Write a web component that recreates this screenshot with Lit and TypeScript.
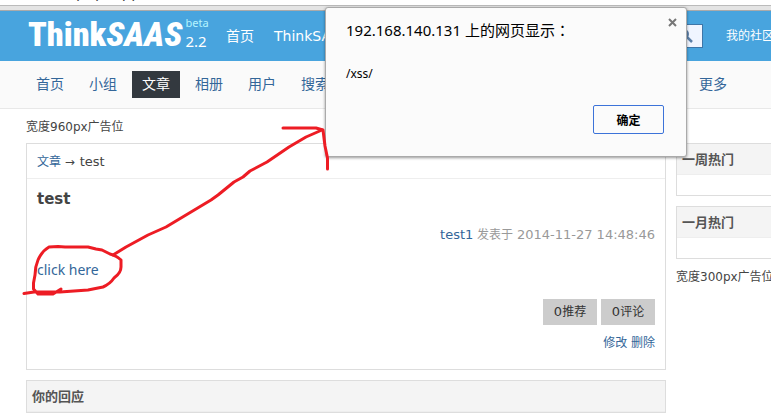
import { LitElement, html, css } from "lit";
import { customElement } from "lit/decorators.js";

@customElement("app-root")
export class AppRoot extends LitElement {
  static styles = css`
    :host {
      display: block;
      position: relative;
      min-height: 100vh;
      overflow: hidden;
      background: #fff;
      color: #444;
      font: 12px/20px "DejaVu Sans", "Noto Sans CJK SC", sans-serif;
    }
    * { box-sizing: border-box; }
    a { color: #369; text-decoration: none; }
    h1, h2, p { margin: 0; }
    .latin { font-size: 13px; }

    .chrome {
      display: flex;
      align-items: flex-end;
      height: 11px;
      padding: 0 0 9px 76px;
      overflow: hidden;
      background: linear-gradient(#fff 5px, #bbb 5px, #bbb 6px, #e4e4e4 6px, #e4e4e4 10px, #aaa 10px);
      font-size: 15px;
      line-height: 18px;
    }
    .header {
      display: flex;
      align-items: center;
      height: 50px;
      padding-left: 28px;
      background: #48a4de;
      white-space: nowrap;
    }
    .header a { color: #fff; font-size: 14px; }
    .header .logo {
      display: flex;
      width: 198px;
      height: 46px;
      line-height: 42px;
      font-family: "Roboto Condensed", "Liberation Sans", sans-serif;
      font-weight: 900;
      font-size: 34px;
    }
    .logo .version {
      display: flex;
      flex-direction: column;
      padding: 1px 0 0 3px;
      font: 11px/18px "Noto Sans", sans-serif;
      color: #b5f4ff;
    }
    .version .number { font-size: 15px; color: #fff; }
    .header .links { display: flex; flex: 1; gap: 20px; }
    .search { display: flex; height: 24px; width: 77px; }
    .search button {
      display: flex;
      align-items: center;
      justify-content: center;
      width: 34px;
      height: 24px;
      margin-left: 20px;
      padding: 0;
      border: 1px solid #3e76a8;
      background: #f0f5ff;
    }
    .header .mine { width: 45px; }
    .header .mine a { font-size: 12px; }

    .nav {
      display: flex;
      align-items: center;
      gap: 5px;
      height: 48px;
      padding-left: 26px;
      border-bottom: 1px solid #e8e8e8;
      background: #fafafa;
      white-space: nowrap;
    }
    .nav a { padding: 0 10px; font-size: 14px; line-height: 27px; }
    .nav a.active { background: #33393f; color: #fff; }
    .nav .more { margin: 0 0 0 auto; padding-right: 44px; }

    .page {
      display: grid;
      grid-template-columns: minmax(0, 1fr) 95px;
      column-gap: 10px;
      padding: 8px 0 0 26px;
    }
    .ad { grid-column: 1 / -1; margin-bottom: 6px; }
    .main, .side { display: flex; flex-direction: column; gap: 10px; }
    .side { width: 300px; }
    .side .ad { margin: -2px 0 0; }
    .box { border: 1px solid #ddd; }
    .box h2 {
      padding: 6px 5px 4px;
      border-bottom: 1px solid #eee;
      background: #f4f4f4;
      color: #555;
      font-size: 13px;
      line-height: 20px;
    }
    .side .body { height: 20px; }
    .crumbs { padding: 8px 10px 6px; border-bottom: 1px solid #eee; }
    .crumbs .latin { margin-left: 1px; }
    .article { padding: 10px; }
    .article h1 { font-size: 15px; line-height: 20px; }
    .meta { margin-top: 16px; text-align: right; color: #999; }
    .content { margin: 15px 0 19px; font-size: 14px; font-family: "Noto Sans", sans-serif; }
    .actions { display: flex; justify-content: flex-end; gap: 4px; }
    .actions button {
      height: 26px;
      width: 54px;
      padding: 0;
      border: 0;
      background: #ccc;
      color: #333;
      font: inherit;
    }
    .manage { margin: 8px 0 6px; text-align: right; }

    .dialog {
      position: absolute;
      top: 7px;
      left: 325px;
      width: 362px;
      padding: 12px 22px 22px 20px;
      border: 1px solid #aaa;
      border-radius: 3px;
      background: #fbfbfb;
      box-shadow: 0 1px 3px #0006;
      color: #000;
      font-family: "Noto Sans", "Noto Sans CJK SC", sans-serif;
    }
    .dialog h2 { font-weight: 400; font-size: 15px; line-height: 20px; }
    .dialog .colon { font-family: "Noto Sans CJK TC", sans-serif; line-height: 1; }
    .dialog p { margin: 24px 0 21px; }
    .dialog .ok {
      display: block;
      width: 71px;
      height: 29px;
      margin-left: auto;
      border: 1px solid #3c73d9;
      border-radius: 2px;
      background: #fbfbfb;
      color: #000;
      font: 700 12px "Noto Sans CJK SC", sans-serif;
    }
    .dialog .close {
      position: absolute;
      top: 10px;
      right: 9px;
      display: flex;
      padding: 0;
      border: 0;
      background: none;
    }
    .marks { position: absolute; top: 0; left: 0; pointer-events: none; }
  `;

  render() {
    const nav = ["首页", "小组", "文章", "相册", "用户", "搜索"];
    return html`
      <div class="chrome"><span>php?app</span></div>
      <header class="header">
        <a class="logo" href="#"><span>Think</span><i>SAAS</i>
          <span class="version"><span>beta</span><span class="number">2.2</span></span></a>
        <div class="links"><a href="#">首页</a><a href="#">ThinkSAAS</a></div>
        <div class="search">
          <button aria-label="搜索">
            <svg width="14" height="14" viewBox="0 0 14 14" fill="none" stroke="#5d80a8">
              <circle cx="5" cy="5" r="4" stroke-width="2" /><path d="M8 8l5 5" stroke-width="2.500" />
            </svg>
          </button>
        </div>
        <div class="mine"><a href="#">我的社区</a></div>
      </header>
      <nav class="nav">
        ${nav.map((n) => html`<a href="#" class=${n === "文章" ? "active" : ""}>${n}</a>`)}
        <a class="more" href="#">更多</a>
      </nav>
      <div class="page">
        <div class="ad">宽度960px广告位</div>
        <main class="main">
          <section class="box">
            <div class="crumbs"><a href="#">文章</a> → <span class="latin">test</span></div>
            <div class="article">
              <h1>test</h1>
              <p class="meta"><a class="latin" href="#">test1</a> 发表于 <span class="latin">2014-11-27 14:48:46</span></p>
              <p class="content"><a href="#">click here</a></p>
              <div class="actions">
                <button><span class="latin">0</span>推荐</button>
                <button><span class="latin">0</span>评论</button>
              </div>
              <p class="manage"><a href="#">修改</a> <a href="#">删除</a></p>
            </div>
          </section>
          <section class="box"><h2>你的回应</h2><div class="body"></div></section>
        </main>
        <aside class="side">
          <section class="box"><h2>一周热门</h2><div class="body"></div></section>
          <section class="box"><h2>一月热门</h2><div class="body"></div></section>
          <div class="ad">宽度300px广告位</div>
        </aside>
      </div>
      <div class="dialog" role="dialog" aria-label="提示">
        <h2>192.168.140.131 上的网页显示<span class="colon">：</span></h2>
        <button class="close" aria-label="关闭">
          <svg width="9" height="9" viewBox="0 0 9 9" stroke="#777" stroke-width="2"><path d="M1 1l7 7M8 1l-7 7" /></svg>
        </button>
        <p>/xss/</p>
        <button class="ok">确定</button>
      </div>
      <svg class="marks" width="340" height="300" viewBox="0 0 340 300" fill="none" stroke="#ed1c24"
        stroke-width="3" stroke-linecap="round" stroke-linejoin="round">
        <path d="M24 293.500L34 292L60 292L88 290L103 287Q110 284 114 278Q121 273 121 267V260Q117 256 110 254L102 250L96 249L88 247H65L58 246.500L49 247Q42 251 38 260Q35 267 35 275L33.500 283V289L38 294H53L61 289" />
        <path d="M113 255L126 247L148 235L166 227L196 209L211 200L218 195L234 182L243 177L250 171L267 162L289 147L306 137L322 130" />
        <path d="M283 128H316L323 130L325 146L327.500 158V169" />
      </svg>
    `;
  }
}
